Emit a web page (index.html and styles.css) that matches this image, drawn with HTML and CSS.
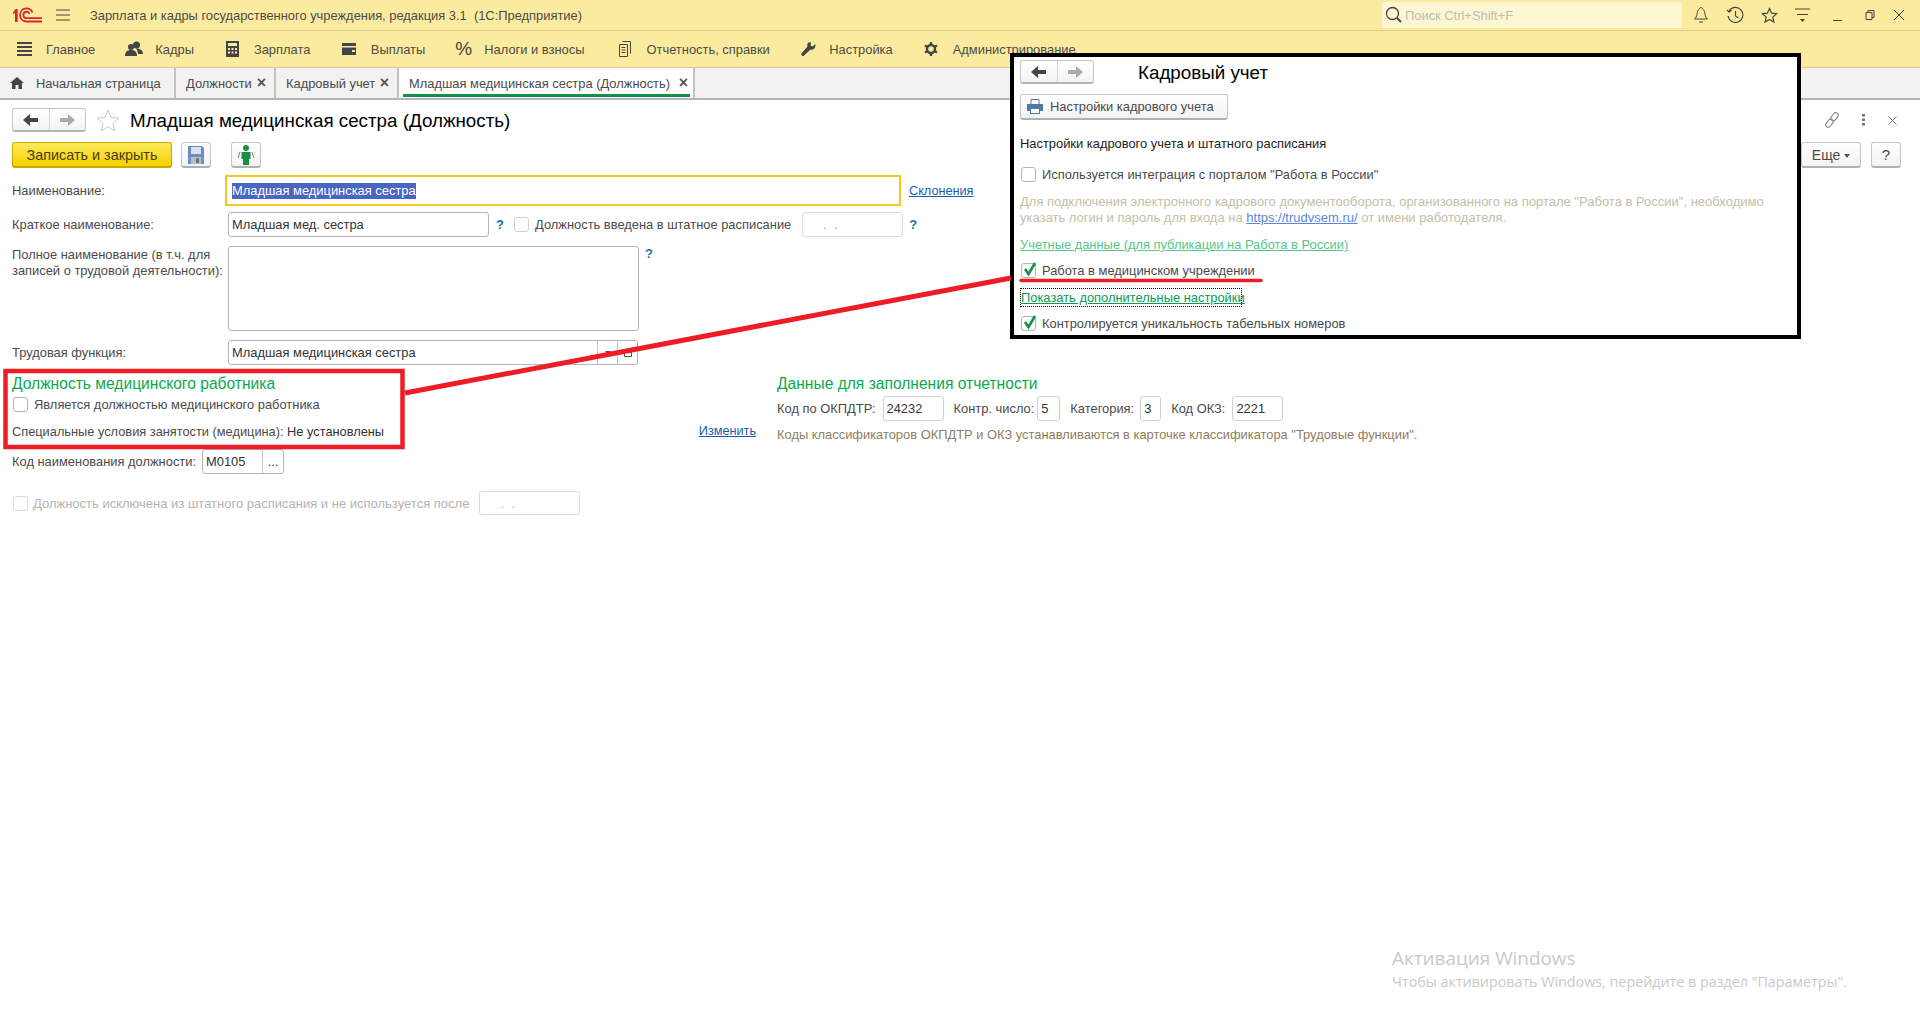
FILE: index.html
```html
<!DOCTYPE html>
<html lang="ru">
<head>
  <meta charset="utf-8">
  <title>Младшая медицинская сестра (Должность)</title>
  <link rel="stylesheet" href="styles.css">
</head>
<body>
  <div class="title-bar">
    <div class="logo">
      <svg width="32" height="20" viewBox="0 0 32 20">
        <path d="M1.300 7L3.500 4H5.700V17H3V8L1.300 9.500z" fill="#d9232e"/>
        <path d="M20.500 7.500A6.500 6.500 0 1 0 14.500 16.500H30M17.500 8.800A3.200 3.200 0 1 0 14.500 13.200H30" stroke="#d9232e" stroke-width="1.800" fill="none"/>
      </svg>
    </div>
    <svg class="burger" width="14" height="12" viewBox="0 0 14 12"><path d="M0 1h14M0 6h14M0 11h14" stroke="#444" fill="none"/></svg>
    <div class="app-title">Зарплата и кадры государственного учреждения, редакция 3.1&nbsp; (1С:Предприятие)</div>
    <div class="search">
      <svg width="17" height="18" viewBox="0 0 17 18"><circle cx="7.500" cy="7.500" r="6" stroke="#444" stroke-width="1.300" fill="none"/><path d="M12 12l4 4" stroke="#444" stroke-width="2" fill="none"/></svg>
      <span>Поиск Ctrl+Shift+F</span>
    </div>
    <div class="win-icons">
      <svg width="16" height="18" viewBox="0 0 16 18"><path d="M8 1.500c-1 0-1.500.8-1.500 1.500C4.500 4 4.300 6 4 8.500 3.800 10.500 2.500 12 1.500 13h13c-1-1-2.300-2.500-2.500-4.500C11.700 6 11.500 4 9.500 3 9.500 2.300 9 1.500 8 1.500zM6 16h4" stroke="#444" fill="none"/></svg>
      <svg width="18" height="18" viewBox="0 0 18 18"><path d="M3 5a7.500 7.500 0 1 1-1 5M1 4l2 2 2.500-1.500M9.500 5v5l3 2" stroke="#444" stroke-width="1.100" fill="none"/></svg>
      <svg width="17" height="17" viewBox="0 0 17 17"><path d="M8.500 1.500l2.100 4.700 5 .5-3.800 3.400 1.100 5-4.400-2.600-4.400 2.600 1.100-5L1.400 6.700l5-.5z" stroke="#444" stroke-width="1.200" fill="none"/></svg>
      <svg width="15" height="16" viewBox="0 0 15 16"><path d="M0 2h15M2 7.500h11" stroke="#444" fill="none"/><path d="M5 12h5l-2.500 3z" fill="#444"/></svg>
      <svg width="10" height="16" viewBox="0 0 10 16"><path d="M0 13.500h9" stroke="#444" fill="none"/></svg>
      <svg width="10" height="16" viewBox="0 0 10 16"><path d="M1 5.500h6v7H1zM3 5.500V3.500h6v7H7" stroke="#444" fill="none"/></svg>
      <svg width="12" height="16" viewBox="0 0 12 16"><path d="M1 3l10 10M11 3L1 13" stroke="#444" fill="none"/></svg>
    </div>
  </div>

  <nav class="menu-bar">
    <a class="menu-item item-main">
      <svg width="15" height="16" viewBox="0 0 15 16"><path d="M0 2h15M0 6h15M0 10h15M0 14h15" stroke="#444" stroke-width="2" fill="none"/></svg>
      Главное
    </a>
    <a class="menu-item item-staff">
      <svg width="18" height="16" viewBox="0 0 18 16"><circle cx="11.500" cy="4" r="3.500" fill="#444"/><circle cx="6" cy="6" r="3" fill="#444"/><path d="M0 15c0-4 2-6 6-6s6 2 6 6zM11 7.500c4 0 7 1.500 7 5.500h-5c0-2-1-4-2-5.500z" fill="#444"/></svg>
      Кадры
    </a>
    <a class="menu-item item-salary">
      <svg width="13" height="16" viewBox="0 0 13 16"><path d="M0 0h13v16H0z" fill="#444"/><path d="M2 2h9v3H2zM2 7h2v2H2zM5.500 7h2v2h-2zM9 7h2v2H9zM2 10.500h2v2H2zM5.500 10.500h2v2h-2zM9 10.500h2v2H9z" fill="#fbeb9e"/></svg>
      Зарплата
    </a>
    <a class="menu-item item-pay">
      <svg width="14" height="14" viewBox="0 0 14 14"><path d="M0 1h14v3H0zM0 5.500h14V13H0z" fill="#444"/><path d="M10 8h3v2h-3z" fill="#fbeb9e"/></svg>
      Выплаты
    </a>
    <a class="menu-item"><span class="percent">%</span>Налоги и взносы</a>
    <a class="menu-item item-reports">
      <svg width="12" height="16" viewBox="0 0 12 16"><path d="M3.500.500h8v12M.500 3.500h8v12h-8zM2.500 6.500h4M2.500 9h4M2.500 11.500h4" stroke="#444" fill="none"/></svg>
      Отчетность, справки
    </a>
    <a class="menu-item item-setup">
      <svg width="15" height="16" viewBox="0 0 15 16"><path d="M14.500 3l-3 2.500-2-1L10 1.500C7.500.500 5.500 3 6.500 5.500L.500 12.500c-.8 1.200 1 3.200 2.300 2.300l6.700-6.300c3 .800 5.500-2 5-5.500z" fill="#444"/></svg>
      Настройка
    </a>
    <a class="menu-item item-admin">
      <svg width="14" height="16" viewBox="0 0 14 16"><circle cx="7" cy="8" r="4" stroke="#444" stroke-width="2.400" fill="none"/><path d="M7 1v3M7 12v3M1 4.500l2.500 1.500M10.500 10l2.500 1.500M13 4.500L10.500 6M3.500 10L1 11.500" stroke="#444" stroke-width="2.400" fill="none"/></svg>
      Администрирование
    </a>
  </nav>

  <div class="tabs">
    <div class="tab tab-home">
      <svg width="14" height="12" viewBox="0 0 14 12"><path d="M7 0L0 6h2v6h3.500V8h3v4H12V6h2z" fill="#444"/></svg>
      Начальная страница
    </div>
    <div class="tab tab-jobs">Должности <span class="tab-close">×</span></div>
    <div class="tab tab-hr">Кадровый учет <span class="tab-close">×</span></div>
    <div class="tab tab-active">Младшая медицинская сестра (Должность) <span class="tab-close">×</span></div>
  </div>

  <main class="form">
    <div class="form-head">
      <div class="nav-btns">
        <span class="nav-btn"><svg width="16" height="12" viewBox="0 0 16 12"><path d="M7 0v4h8v4H7v4L0 6z" fill="#444"/></svg></span>
        <span class="nav-btn"><svg width="16" height="12" viewBox="0 0 16 12"><path d="M9 0v4H1v4h8v4l7-6z" fill="#aaa"/></svg></span>
      </div>
      <svg class="fav" width="24" height="22" viewBox="0 0 24 22"><path d="M12 1l3 7.500 8 .6-6.100 5.200 1.900 7.700-6.800-4.200-6.800 4.200 1.900-7.700L1 9.100l8-.6z" stroke="#c8c8c8" fill="#fff"/></svg>
      <h1>Младшая медицинская сестра (Должность)</h1>
      <div class="head-tools">
        <svg width="16" height="18" viewBox="0 0 16 18"><g transform="rotate(38 8 9)" stroke="#888" stroke-width="1.100" fill="none"><rect x="5.500" y="0.500" width="5" height="9" rx="2.500"/><rect x="5.500" y="8.500" width="5" height="9" rx="2.500"/></g></svg>
        <svg width="4" height="12" viewBox="0 0 4 12"><path d="M0 0h3v2.500H0zM0 4.500h3V7H0zM0 9h3v2.500H0z" fill="#777"/></svg>
        <svg width="9" height="9" viewBox="0 0 9 9"><path d="M.500.500l8 8M8.500.500l-8 8" stroke="#666" fill="none"/></svg>
      </div>
    </div>

    <div class="commands">
      <button class="btn btn-primary">Записать и закрыть</button>
      <button class="btn btn-icon">
        <svg width="16" height="18" viewBox="0 0 16 18"><path d="M0 0h14l2 2v16H0z" fill="#6d8fbd"/><path d="M3 1h10v7H3z" fill="#d7e2f0"/><path d="M3 11h10v7H3z" fill="#b9bfc7"/><path d="M8 12h3v5H8z" fill="#6d7580"/></svg>
      </button>
      <button class="btn btn-icon btn-person">
        <svg width="18" height="20" viewBox="0 0 18 20"><circle cx="9" cy="3" r="3" fill="#179044"/><path d="M4.500 7h9v7h-1.500v6H6v-6H4.500z" fill="#179044"/><path d="M3 7L1 13M15 7l2 6" stroke="#888" fill="none"/></svg>
      </button>
      <button class="btn btn-more">Еще <i class="caret"></i></button>
      <button class="btn btn-help">?</button>
    </div>

    <div class="row row-name">
      <label class="lbl lbl-name">Наименование:</label>
      <div class="field field-focus"><span class="selected">Младшая медицинская сестра</span></div>
      <a class="link decl">Склонения</a>
    </div>

    <div class="row row-short">
      <label class="lbl">Краткое наименование:</label>
      <div class="field field-short">Младшая мед. сестра</div>
      <span class="hint">?</span>
      <span class="check check-staff"></span>
      <span class="staff-text">Должность введена в штатное расписание</span>
      <div class="field field-date">. &nbsp;.</div>
      <span class="hint">?</span>
    </div>

    <div class="row row-full">
      <label class="lbl">Полное наименование (в т.ч. для<br>записей о трудовой деятельности):</label>
      <div class="field field-area"></div>
      <span class="hint">?</span>
    </div>

    <div class="row row-func">
      <label class="lbl">Трудовая функция:</label>
      <div class="field field-func">
        <span class="func-value">Младшая медицинская сестра</span>
        <span class="func-btn"><i class="caret"></i></span>
        <span class="func-btn"><svg width="8" height="8" viewBox="0 0 8 8"><path d="M.500.500h7v7h-7zM.500 3h7" stroke="#555" fill="none"/></svg></span>
      </div>
    </div>

    <div class="lower">
      <section class="col-left">
        <h2>Должность медицинского работника</h2>
        <div class="check-row"><span class="check"></span>Является должностью медицинского работника</div>
        <div class="special">
          <span>Специальные условия занятости (медицина): <span class="special-val">Не установлены</span></span>
          <a class="link">Изменить</a>
        </div>
        <div class="code-row">
          <span>Код наименования должности:</span>
          <div class="field field-code"><span class="code-value">М0105</span><span class="code-btn">...</span></div>
        </div>
        <div class="excl-row">
          <span class="check check-off"></span>
          <span>Должность исключена из штатного расписания и не используется после</span>
          <div class="field field-excl">. &nbsp;.</div>
        </div>
      </section>

      <section class="col-right">
        <h2>Данные для заполнения отчетности</h2>
        <div class="report-row">
          <span>Код по ОКПДТР:</span><div class="field f-okpdtr">24232</div>
          <span>Контр. число:</span><div class="field f-contr">5</div>
          <span>Категория:</span><div class="field f-cat">3</div>
          <span>Код ОКЗ:</span><div class="field f-okz">2221</div>
        </div>
        <p class="note">Коды классификаторов ОКПДТР и ОКЗ устанавливаются в карточке классификатора "Трудовые функции".</p>
      </section>
    </div>
  </main>

  <!-- pasted settings window -->
  <aside class="panel">
    <div class="panel-head">
      <div class="nav-btns">
        <span class="nav-btn"><svg width="16" height="12" viewBox="0 0 16 12"><path d="M7 0v4h8v4H7v4L0 6z" fill="#444"/></svg></span>
        <span class="nav-btn"><svg width="16" height="12" viewBox="0 0 16 12"><path d="M9 0v4H1v4h8v4l7-6z" fill="#aaa"/></svg></span>
      </div>
      <div class="panel-title">Кадровый учет</div>
    </div>
    <button class="btn btn-settings">
      <svg width="16" height="15" viewBox="0 0 16 15"><path d="M4 .500h8v5H4z" fill="#fff" stroke="#5b7594"/><path d="M0 5h16v7h-3v3H3v-3H0z" fill="#4f7aa8"/><path d="M4 10h8v4H4z" fill="#fff"/></svg>
      Настройки кадрового учета
    </button>
    <div class="panel-heading">Настройки кадрового учета и штатного расписания</div>
    <div class="check-row panel-r1"><span class="check"></span>Используется интеграция с порталом "Работа в России"</div>
    <p class="panel-note">Для подключения электронного кадрового документооборота, организованного на портале "Работа в России", необходимо<br>указать логин и пароль для входа на <a class="note-link">https://trudvsem.ru/</a> от имени работодателя.</p>
    <a class="green-link">Учетные данные (для публикации на Работа в России)</a>
    <div class="check-row panel-r2">
      <span class="check"><svg class="tick" width="16" height="17" viewBox="0 0 16 17"><path d="M3 8l3.500 5L13 2" stroke="#0f9347" stroke-width="2.600" fill="none"/></svg></span>Работа в медицинском учреждении
    </div>
    <a class="more-link">Показать дополнительные настройки</a>
    <div class="check-row panel-r3">
      <span class="check"><svg class="tick" width="16" height="17" viewBox="0 0 16 17"><path d="M3 8l3.500 5L13 2" stroke="#0f9347" stroke-width="2.600" fill="none"/></svg></span>Контролируется уникальность табельных номеров
    </div>
  </aside>

  <!-- red marks drawn over the screenshot -->
  <svg class="marks" width="1920" height="1031" viewBox="0 0 1920 1031">
    <rect x="5.500" y="371" width="397" height="76" stroke="#ee1c25" stroke-width="4.500" fill="none"/>
    <path d="M405 393L1011 278" stroke="#ee1c25" stroke-width="5" fill="none"/>
    <path d="M1021 280.500h240" stroke="#ee1c25" stroke-width="3.500" stroke-linecap="round" fill="none"/>
  </svg>

  <div class="activation">
    <div class="activation-title">Активация Windows</div>
    <div class="activation-sub">Чтобы активировать Windows, перейдите в раздел "Параметры".</div>
  </div>
</body>
</html>
```

FILE: styles.css
```css
* {
  margin: 0;
  padding: 0;
  box-sizing: border-box;
}

html, body {
  width: 1920px;
  height: 1031px;
  overflow: hidden;
}

body {
  position: relative;
  background: #fff;
  color: #4b4b4b;
  font-family: "Liberation Sans", Arial, sans-serif;
  font-size: 12.900px;
  white-space: nowrap;
}

/* top bars */
.title-bar {
  height: 31px;
  display: flex;
  align-items: center;
  background: #fbeb9e;
  border-bottom: 1px solid #d9cc86;
}

.logo {
  width: 56px;
  padding-left: 12px;
  display: flex;
}

.burger {
  flex: none;
}

.app-title {
  margin-left: 20px;
  width: 1292px;
}

.search {
  width: 300px;
  height: 26px;
  display: flex;
  align-items: center;
  gap: 3px;
  padding-left: 3px;
  background: #fdf6d3;
  border-radius: 2px;
  color: #bdbdb0;
}

.win-icons {
  display: flex;
  align-items: center;
  margin-left: 11px;
  gap: 17px;
}

.win-icons svg:nth-child(5) { margin-left: 6px; }
.win-icons svg:nth-child(6) { margin-left: 5px; }
.win-icons svg:nth-child(7) { margin-left: 1px; }

.menu-bar {
  height: 37px;
  display: flex;
  align-items: center;
  padding-left: 17px;
  gap: 30px;
  background: #fbeb9e;
  border-bottom: 1px solid #d9cc86;
}

.menu-item {
  display: flex;
  align-items: center;
  gap: 15px;
}

.item-main { gap: 14px; }
.item-staff { gap: 12px; }
.item-salary { margin-left: 2px; }
.item-pay { margin-left: 1.500px; }
.item-reports { margin-left: 5px; }
.item-setup { margin-left: 1.500px; gap: 13px; }
.item-admin { margin-left: 1px; }

.percent {
  font-size: 19px;
  width: 15px;
  margin-right: -1px;
  color: #444;
}

.tabs {
  height: 32px;
  display: flex;
  background: #f2f2f2;
  border-bottom: 2px solid #b5b5b5;
}

.tab {
  position: relative;
  height: 30px;
  display: flex;
  align-items: center;
  padding-left: 10px;
  border-right: 2px solid #c2c2c2;
}

.tab-home { width: 176px; gap: 12px; }
.tab-jobs { width: 100px; }
.tab-hr { width: 123px; }
.tab-active { width: 296px; background: #fff; }

.tab-active::after {
  content: '';
  position: absolute;
  left: 4px;
  right: 3px;
  bottom: 1px;
  height: 3px;
  background: #0f9347;
}

.tab-close {
  position: absolute;
  right: 8px;
  top: 6px;
  font-size: 16px;
  font-weight: bold;
  color: #555;
}

.tab-active .tab-close {
  right: 5px;
}

/* form */
.form {
  padding: 8px 19px 0 12px;
}

.form-head {
  height: 24px;
  display: flex;
  align-items: center;
}

.nav-btns {
  width: 74px;
  height: 24px;
  display: flex;
  background: linear-gradient(#fff, #f3f3f3);
  border: 1px solid #c6c6c6;
  border-bottom: 2px solid #b5b5b5;
  border-radius: 3px;
}

.nav-btn {
  flex: 1;
  display: flex;
  align-items: center;
  justify-content: center;
}

.nav-btn + .nav-btn {
  border-left: 1px solid #d5d5d5;
}

.fav {
  margin-left: 10px;
}

h1 {
  margin-left: 10px;
  padding-top: 2px;
  font-size: 18.800px;
  font-weight: normal;
  color: #000;
}

.head-tools {
  margin-left: auto;
  display: flex;
  align-items: center;
  gap: 22px;
  padding-right: 4px;
}

.commands {
  height: 26px;
  margin-top: 10px;
  display: flex;
}

.btn {
  height: 26px;
  font-family: inherit;
  font-size: inherit;
  color: #4b4b4b;
  background: linear-gradient(#fff, #f2f2f2);
  border: 1px solid #c6c6c6;
  border-bottom: 2px solid #b0b0b0;
  border-radius: 3px;
}

.btn-primary {
  width: 160px;
  font-size: 14.400px;
  background: linear-gradient(#fdeb5c, #f6d000);
  border-color: #c7a900;
  color: #4a3c00;
}

.btn-icon {
  width: 30px;
  margin-left: 9px;
  display: flex;
  align-items: center;
  justify-content: center;
}

.btn-person {
  margin-left: 20px;
}

.btn-more {
  width: 60px;
  margin-left: auto;
  font-size: 14px;
}

.btn-help {
  width: 30px;
  margin-left: 10px;
  font-size: 15px;
}

.caret {
  display: inline-block;
  border: 3px solid transparent;
  border-top: 4px solid #555;
  border-bottom: 0;
  vertical-align: middle;
}

.row {
  display: flex;
}

.lbl {
  width: 216px;
  flex: none;
}

.field {
  height: 25px;
  display: flex;
  align-items: center;
  padding-left: 3px;
  background: #fff;
  border: 1px solid #b5b5b5;
  border-radius: 3px;
  color: #333;
}

.row-name {
  margin-top: 7px;
  align-items: center;
}

.lbl-name {
  width: 213px;
}

.field-focus {
  width: 676px;
  height: 31px;
  padding-left: 5px;
  border: 2px solid #f4c81e;
  border-radius: 0;
}

.selected {
  height: 16px;
  line-height: 16px;
  background: #4a66c2;
  color: #fff;
}

.link {
  font-size: 12.700px;
  color: #1a5cb0;
  text-decoration: underline;
}

.decl {
  margin-left: 8px;
}

.row-short {
  margin-top: 6px;
  align-items: center;
}

.field-short {
  width: 261px;
}

.hint {
  width: 10px;
  text-align: center;
  color: #1574b8;
  font-weight: bold;
}

.row-short .hint:nth-of-type(1) {
  margin-left: 6px;
}

.check {
  position: relative;
  flex: none;
  width: 15px;
  height: 15px;
  background: #fff;
  border: 1px solid #b5b5b5;
  border-radius: 3px;
}

.check-staff {
  margin-left: 9px;
  border-color: #d0d0d0;
}

.staff-text {
  margin-left: 6px;
}

.field-date {
  width: 101px;
  margin-left: 11px;
  margin-right: 5px;
  padding-left: 20px;
  border-color: #dcdcdc;
  color: #999;
}

.row-full {
  margin-top: 9px;
}

.row-full .lbl {
  padding-top: 1px;
  line-height: 16px;
}

.field-area {
  width: 411px;
  height: 85px;
  margin-right: 5px;
}

.row-func {
  margin-top: 9px;
  align-items: center;
}

.field-func {
  width: 410px;
  padding-right: 0;
}

.func-value {
  flex: 1;
}

.func-btn {
  width: 20px;
  height: 23px;
  display: flex;
  align-items: center;
  justify-content: center;
  border-left: 1px solid #c6c6c6;
}

.lower {
  display: flex;
  margin-top: 9px;
}

.col-left {
  width: 744px;
  margin-right: 21px;
}

h2 {
  height: 20px;
  line-height: 20px;
  font-size: 15.600px;
  font-weight: normal;
  color: #0aa84f;
}

.check-row {
  display: flex;
  align-items: center;
  gap: 6px;
}

.col-left .check-row {
  height: 16px;
  margin-top: 3px;
  padding: 0 0 1px 1px;
}

.special {
  height: 20px;
  margin-top: 8px;
  display: flex;
  align-items: center;
  justify-content: space-between;
  font-size: 12.800px;
}

.special-val {
  color: #333;
}

.code-row {
  margin-top: 8px;
  display: flex;
  align-items: center;
  gap: 6px;
}

.field-code {
  width: 82px;
  padding-right: 0;
}

.code-value {
  flex: 1;
}

.code-btn {
  width: 21px;
  height: 23px;
  line-height: 23px;
  text-align: center;
  border-left: 1px solid #c6c6c6;
}

.excl-row {
  height: 24px;
  margin-top: 17px;
  display: flex;
  align-items: center;
  padding-left: 1px;
  gap: 5px;
  font-size: 13px;
  color: #b3b3b3;
}

.check-off {
  border-color: #dcdcdc;
}

.field-excl {
  width: 101px;
  height: 24px;
  margin-left: 5px;
  padding-left: 20px;
  border-color: #dcdcdc;
  color: #b3b3b3;
}

.report-row {
  height: 25px;
  margin-top: 2px;
  display: flex;
  align-items: center;
  gap: 5px;
}

.report-row .field {
  margin-right: 5px;
  border-color: #d0d0d0;
}

.f-okpdtr { width: 61px; margin-left: 2px; }
.f-contr { width: 23px; margin-left: -2px; }
.f-cat { width: 21px; margin-left: 1px; }
.f-okz { width: 51px; margin-left: 2px; }

.note {
  margin-top: 4px;
  height: 20px;
  line-height: 20px;
  color: #8f7d5e;
}

/* settings window, pasted over the form */
.panel {
  position: absolute;
  left: 1010px;
  top: 53px;
  width: 791px;
  height: 286px;
  padding: 3px 6px 0;
  background: #fff;
  border: 4px solid #000;
}

.panel-head {
  height: 24px;
  display: flex;
  align-items: center;
}

.panel-title {
  margin-left: 44px;
  padding-top: 2px;
  font-size: 18.800px;
  color: #000;
}

.btn-settings {
  width: 208px;
  margin-top: 10px;
  display: flex;
  align-items: center;
  gap: 7px;
  padding-left: 6px;
}

.panel-heading {
  height: 20px;
  line-height: 20px;
  margin-top: 14px;
  color: #222;
}

.panel-r1 {
  height: 20px;
  margin-top: 11px;
  padding: 0 0 1px 1px;
}

.panel-note {
  margin-top: 9px;
  line-height: 16px;
  font-size: 13px;
  color: #c6bea6;
}

.note-link {
  color: #5b86d8;
  text-decoration: underline;
}

.green-link {
  display: block;
  height: 20px;
  line-height: 20px;
  margin-top: 9px;
  color: #55c78a;
  text-decoration: underline;
}

.panel-r2 {
  height: 20px;
  margin-top: 5px;
  padding-left: 1px;
}

.tick {
  position: absolute;
  left: 0;
  top: -3px;
}

.more-link {
  display: block;
  width: 222px;
  height: 19px;
  line-height: 17px;
  margin-top: 8px;
  color: #0a9a55;
  text-decoration: underline;
  border: 1px dotted #000;
}

.panel-r3 {
  height: 20px;
  margin-top: 6px;
  padding-left: 1px;
}

.marks {
  position: absolute;
  left: 0;
  top: 0;
  pointer-events: none;
}

.activation {
  position: absolute;
  left: 1392px;
  top: 945px;
  color: #c9c9c9;
  font-family: "Open Sans", sans-serif;
}

.activation-title {
  font-size: 18.900px;
}

.activation-sub {
  margin-top: 1px;
  font-size: 14.300px;
}
```
